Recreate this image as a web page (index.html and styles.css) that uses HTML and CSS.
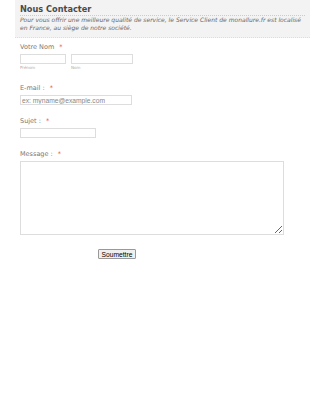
FILE: index.html
```html
<!DOCTYPE html>
<html lang="fr">
<head>
    <meta charset="UTF-8">
    <meta name="viewport" content="width=device-width, initial-scale=1.0">
    <title>Nous Contacter</title>
    <link rel="stylesheet" href="styles.css">
</head>
<body>
    <form class="form-all">
        <div class="form-header-group">
            <h2 class="form-header">Nous Contacter</h2>
            <div class="form-subheader">Pour vous offrir une meilleure qualité de service, le Service Client de monallure.fr est localisé en France, au siège de notre société.</div>
        </div>

        <div class="form-line">
            <label class="form-label">Votre Nom <span class="required">*</span></label>
            <div class="name-row">
                <span class="sub-field">
                    <input type="text" class="input-first">
                    <label class="sub-label">Prénom</label>
                </span>
                <span class="sub-field">
                    <input type="text" class="input-last">
                    <label class="sub-label">Nom</label>
                </span>
            </div>
        </div>

        <div class="form-line">
            <label class="form-label">E-mail : <span class="required">*</span></label>
            <input type="text" class="input-email" placeholder="ex: myname@example.com">
        </div>

        <div class="form-line">
            <label class="form-label">Sujet : <span class="required">*</span></label>
            <input type="text" class="input-subject">
        </div>

        <div class="form-line">
            <label class="form-label">Message : <span class="required">*</span></label>
            <textarea class="input-message"></textarea>
        </div>

        <div class="form-buttons">
            <button type="button" class="submit-button">Soumettre</button>
        </div>
    </form>
</body>
</html>
```

FILE: styles.css
```css
body {
    margin: 0;
    font-family: "DejaVu Sans", Verdana, sans-serif;
    background: white;
    color: #555;
}

.form-all {
    width: 295px;
    margin-left: 15px;
}

.form-header-group {
    background: #f3f3f3;
    padding: 4px 5px 5px 5px;
    border-bottom: 1px dotted #ddd;
}

.form-header {
    margin: 0;
    font-size: 8.2px;
    line-height: 11px;
    font-weight: bold;
    color: #4a4a4a;
    border-bottom: 1px dotted #ccc;
}

.form-subheader {
    font-size: 6px;
    font-style: italic;
    color: #666;
    line-height: 8px;
}

.form-line {
    padding: 5px 5px 7px 5px;
}

.form-line:first-of-type {
    padding-top: 7px;
}

.form-label {
    display: block;
    font-size: 6.5px;
    line-height: 8px;
    color: #777;
    margin-bottom: 3px;
}

.required {
    color: #e44;
    margin-left: 3px;
}

input, textarea {
    box-sizing: border-box;
    border: 1px solid #ddd;
    height: 10px;
    padding: 0 1px;
    margin: 0;
    font-family: "Liberation Sans", Arial, sans-serif;
    font-size: 6.7px;
}

input::placeholder {
    color: #888;
}

.name-row {
    display: flex;
    gap: 5px;
}

.sub-field {
    display: flex;
    flex-direction: column;
}

.sub-label {
    font-size: 4px;
    line-height: 8px;
    color: #aaa;
}

.input-first {
    width: 46px;
}

.input-last {
    width: 62px;
}

.input-email {
    display: block;
    width: 112px;
}

.input-subject {
    display: block;
    width: 76px;
}

.input-message {
    display: block;
    width: 264px;
    height: 74px;
    resize: both;
}

.form-buttons {
    padding: 7px 0 0 83px;
}

.submit-button {
    display: block;
    font-family: "Liberation Sans", Arial, sans-serif;
    font-size: 6.7px;
    width: 38px;
    height: 10px;
    padding: 0;
    background: #efefef;
    border: 1px solid #999;
    border-radius: 1px;
    color: #000;
}
```
